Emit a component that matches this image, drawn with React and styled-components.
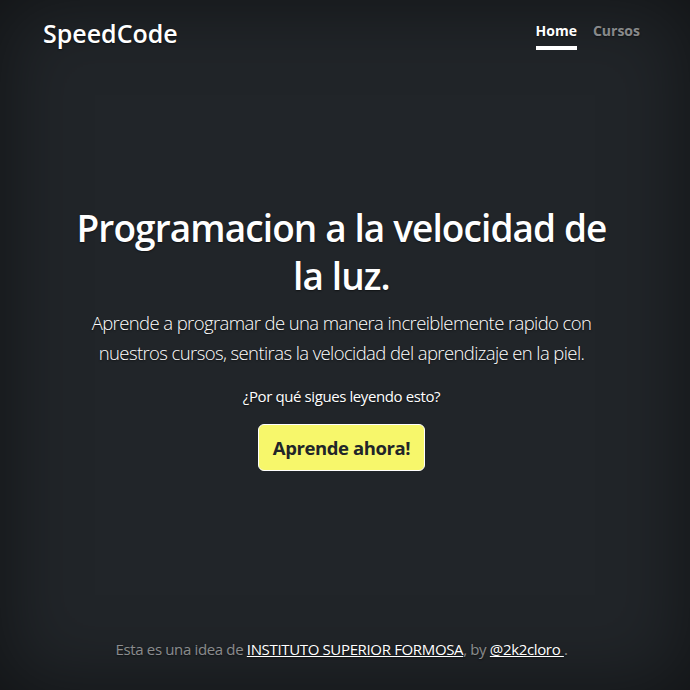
import React from 'react';
import styled, { createGlobalStyle } from 'styled-components';

const GlobalStyle = createGlobalStyle`
  html, body, #root {
    height: 100%;
  }
  body {
    margin: 0;
    background-color: #212529;
    color: #fff;
    font-family: "Open Sans", "Noto Sans", sans-serif;
    text-shadow: 0 0.05rem 0.1rem rgba(0, 0, 0, 0.5);
    box-shadow: inset 0 0 5rem rgba(0, 0, 0, 0.5);
  }
`;

function App() {
  return (
    <>
      <GlobalStyle />
      <Cover>
        <Header>
          <Brand>SpeedCode</Brand>
          <Nav>
            <NavItem href="#" $active>Home</NavItem>
            <NavItem href="#">Cursos</NavItem>
          </Nav>
        </Header>

        <Main>
          <Title>Programacion a la velocidad de la luz.</Title>
          <Lead>
            Aprende a programar de una manera increiblemente rapido con nuestros cursos,
            sentiras la velocidad del aprendizaje en la piel.
          </Lead>
          <Question>¿Por qué sigues leyendo esto?</Question>
          <Button>Aprende ahora!</Button>
        </Main>

        <Footer>
          Esta es una idea de <FootLink href="#">INSTITUTO SUPERIOR FORMOSA</FootLink>, by{' '}
          <FootLink href="#">@2k2cloro </FootLink>.
        </Footer>
      </Cover>
    </>
  );
}
export default App;

const Cover = styled.div`
  height: 100%;
  box-sizing: border-box;
  display: flex;
  flex-direction: column;
  text-align: center;
  padding: 16px 50px 29px 43px;
`;

const Header = styled.header`
  display: flex;
  justify-content: space-between;
  align-items: flex-start;
`;

const Brand = styled.h3`
  margin: 0;
  font-size: 25px;
  font-weight: 600;
  letter-spacing: 0;
  line-height: 1.2;
  padding-top: 2px;
`;

const Nav = styled.nav`
  display: flex;
  gap: 16px;
`;

const NavItem = styled.a`
  padding: 4px 0;
  font-size: 14px;
  font-weight: 700;
  line-height: 1.55;
  text-decoration: none;
  color: ${p => (p.$active ? '#fff' : 'rgba(255, 255, 255, 0.5)')};
  border-bottom: 4px solid ${p => (p.$active ? '#fff' : 'transparent')};
`;

const Main = styled.main`
  margin: auto 0;
  padding: 0 16px 12px;
  display: flex;
  flex-direction: column;
  align-items: center;
`;

const Title = styled.h1`
  margin: 0 0 8px;
  font-size: 37px;
  font-weight: 600;
  letter-spacing: -0.9px;
  line-height: 48px;
  max-width: 560px;
`;

const Lead = styled.p`
  margin: 0 0 16px;
  font-size: 18.5px;
  font-weight: 300;
  letter-spacing: -0.6px;
  line-height: 30px;
  max-width: 540px;
`;

const Question = styled.p`
  margin: 0 0 16px;
  font-size: 15px;
  letter-spacing: -0.4px;
  line-height: 24px;
`;

const Button = styled.button`
  font-family: inherit;
  font-size: 18.5px;
  font-weight: 700;
  letter-spacing: -0.4px;
  color: #212529;
  background-color: #f7f76b;
  border: 1px solid #fff;
  border-radius: 6px;
  padding: 8px 14px;
  line-height: 29px;
  cursor: pointer;
`;

const Footer = styled.footer`
  font-size: 15px;
  letter-spacing: -0.35px;
  line-height: 24px;
  color: rgba(255, 255, 255, 0.5);
`;

const FootLink = styled.a`
  color: #fff;
  text-decoration: underline;
`;
